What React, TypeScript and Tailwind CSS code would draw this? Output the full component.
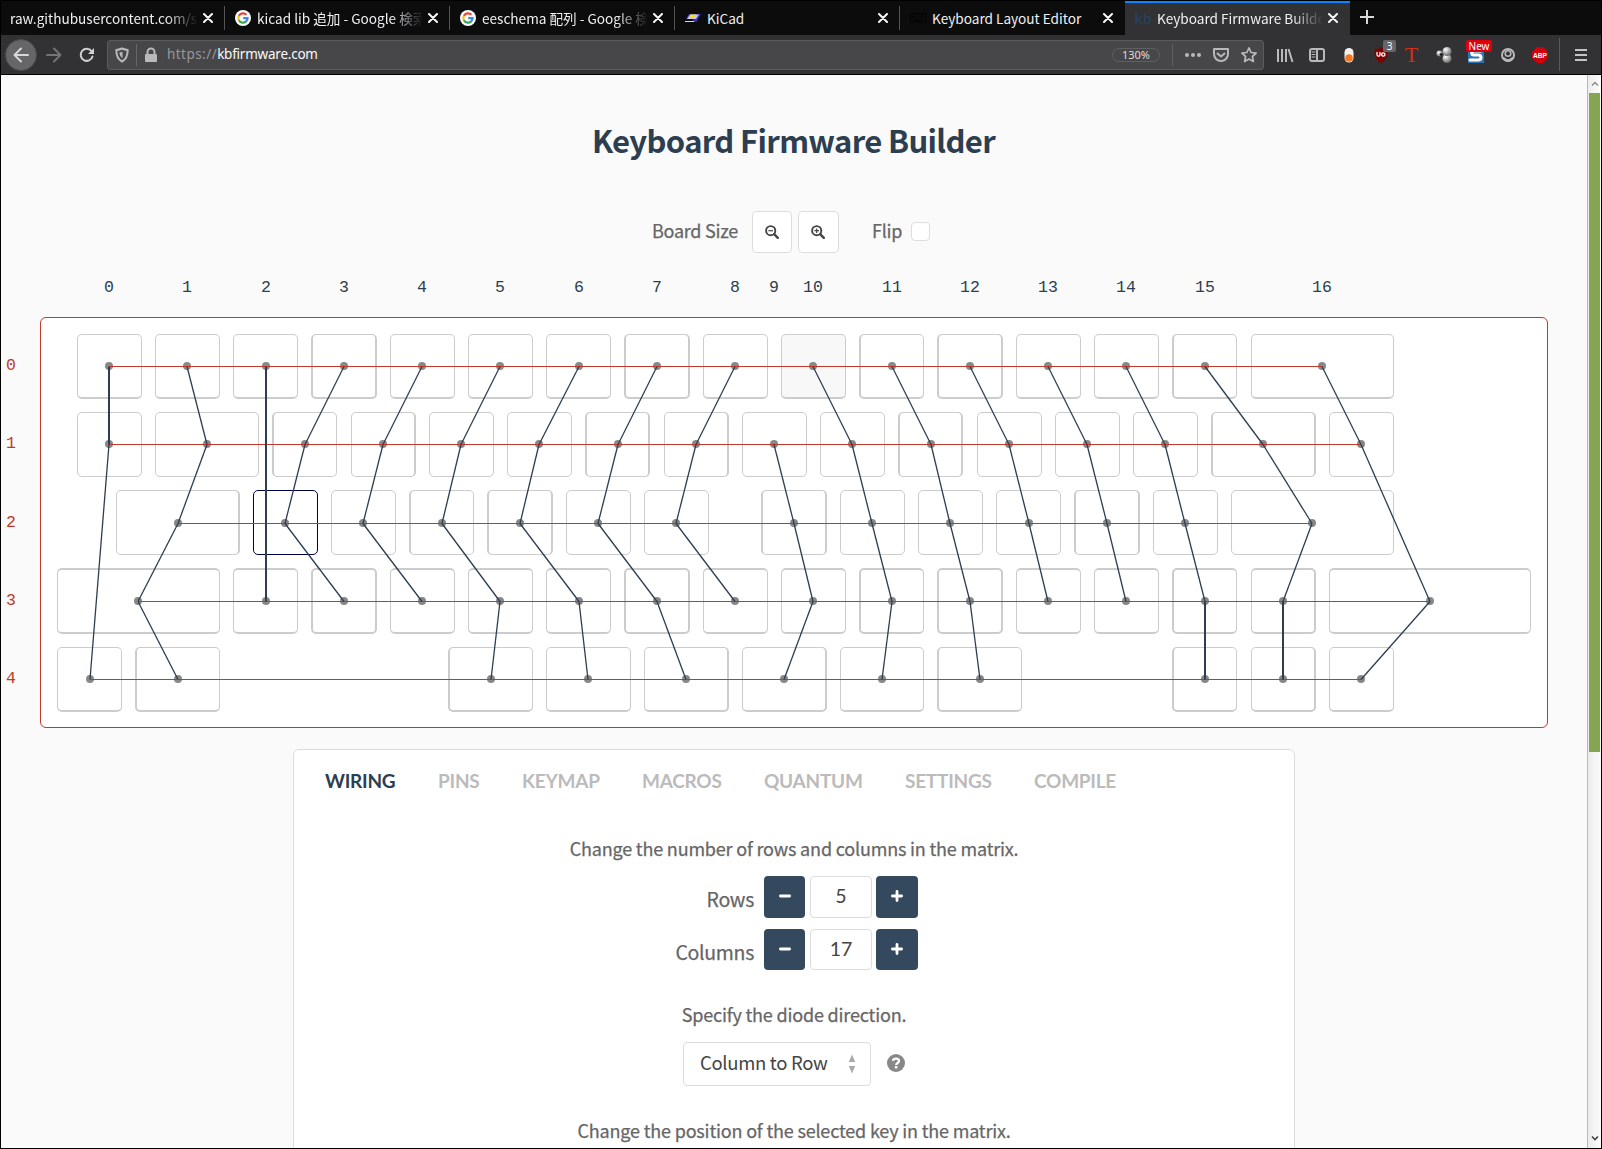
import React from "react";

const UNIT = 78.25;
const ORIGIN = 10.4;

/* Matrix wiring board: key rows given as [x, width] in key units */
const KEY_ROWS: [number, number][][] = [
  [[0.25, 1], [1.25, 1], [2.25, 1], [3.25, 1], [4.25, 1], [5.25, 1], [6.25, 1], [7.25, 1], [8.25, 1], [9.25, 1], [10.25, 1], [11.25, 1], [12.25, 1], [13.25, 1], [14.25, 1], [15.25, 2]],
  [[0.25, 1], [1.25, 1.5], [2.75, 1], [3.75, 1], [4.75, 1], [5.75, 1], [6.75, 1], [7.75, 1], [8.75, 1], [9.75, 1], [10.75, 1], [11.75, 1], [12.75, 1], [13.75, 1], [14.75, 1.5], [16.25, 1]],
  [[0.75, 1.75], [2.5, 1], [3.5, 1], [4.5, 1], [5.5, 1], [6.5, 1], [7.5, 1], [9, 1], [10, 1], [11, 1], [12, 1], [13, 1], [14, 1], [15, 2.25]],
  [[0, 2.25], [2.25, 1], [3.25, 1], [4.25, 1], [5.25, 1], [6.25, 1], [7.25, 1], [8.25, 1], [9.25, 1], [10.25, 1], [11.25, 1], [12.25, 1], [13.25, 1], [14.25, 1], [15.25, 1], [16.25, 2.75]],
  [[0, 1], [1, 1.25], [5, 1.25], [6.25, 1.25], [7.5, 1.25], [8.75, 1.25], [10, 1.25], [11.25, 1.25], [14.25, 1], [15.25, 1], [16.25, 1]],
];
const ROW_TOP = [17, 95, 173, 251, 330];
const ROW_BOTTOM = [82, 160, 238, 317, 395];
const WIRE_Y = [49, 127, 206, 284, 362];
const WIDE_LEFT = [3.25, 7.25, 10.25, 11.25, 14.25, 2.75, 6.75, 10.75, 14.75, 4.5, 5.5, 9, 13, 1, 5];
const WIDE_RIGHT = [4.25, 8.25, 12.25, 16.25, 4.75, 7.75, 8.75, 11.75, 2.5, 6.5, 10, 14];

/* Column wires: [row, centre x in units] */
const COLUMNS: [number, number][][] = [
  [[0, 0.75], [1, 0.75], [4, 0.5]],
  [[0, 1.75], [1, 2], [2, 1.625], [3, 1.125], [4, 1.625]],
  [[0, 2.75], [3, 2.75]],
  [[0, 3.75], [1, 3.25], [2, 3], [3, 3.75]],
  [[0, 4.75], [1, 4.25], [2, 4], [3, 4.75]],
  [[0, 5.75], [1, 5.25], [2, 5], [3, 5.75], [4, 5.625]],
  [[0, 6.75], [1, 6.25], [2, 6], [3, 6.75], [4, 6.875]],
  [[0, 7.75], [1, 7.25], [2, 7], [3, 7.75], [4, 8.125]],
  [[0, 8.75], [1, 8.25], [2, 8], [3, 8.75]],
  [[1, 9.25], [2, 9.5], [3, 9.75], [4, 9.375]],
  [[0, 9.75], [1, 10.25], [2, 10.5], [3, 10.75], [4, 10.625]],
  [[0, 10.75], [1, 11.25], [2, 11.5], [3, 11.75], [4, 11.875]],
  [[0, 11.75], [1, 12.25], [2, 12.5], [3, 12.75]],
  [[0, 12.75], [1, 13.25], [2, 13.5], [3, 13.75]],
  [[0, 13.75], [1, 14.25], [2, 14.5], [3, 14.75], [4, 14.75]],
  [[0, 14.75], [1, 15.5], [2, 16.125], [3, 15.75], [4, 15.75]],
  [[0, 16.25], [1, 16.75], [3, 17.625], [4, 16.75]],
];

const cx = (u: number) => Math.round(ORIGIN + u * UNIT);

function Key({ row, x, w }: { row: number; x: number; w: number }) {
  const wideL = WIDE_LEFT.includes(x);
  const wideR = WIDE_RIGHT.includes(x + w);
  const l = ORIGIN + x * UNIT + 6.85;
  const left = wideL ? Math.ceil(l - 0.05) - 1 : Math.round(l);
  const right = Math.ceil(ORIGIN + (x + w) * UNIT - 6.85);
  const selected = row === 2 && x === 2.5;
  const hovered = row === 0 && x === 9.25;
  return (
    <div
      className={`absolute rounded-[5px] border-solid ${selected ? "border-[#000044]" : "border-[#cccccc]"} ${hovered ? "bg-[#f8f8f8]" : "bg-white"}`}
      style={{
        left,
        top: ROW_TOP[row],
        width: right - left,
        height: ROW_BOTTOM[row] - ROW_TOP[row],
        borderLeftWidth: wideL ? 2 : 1,
        borderRightWidth: wideR && !selected ? 2 : 1,
        borderTopWidth: row === 3 ? 2 : 1,
        borderBottomWidth: row === 0 || row > 2 ? 2 : 1,
      }}
    />
  );
}

function Board() {
  const dots = COLUMNS.flat();
  return (
    <div className="relative ml-[39px] h-[411px] w-[1508px] font-['Liberation_Mono',monospace] text-[16.5px]">
      <div className="h-full w-full rounded-[6px] border border-[#c0392b] bg-white" />
      {KEY_ROWS.map((keys, r) => keys.map(([x, w]) => <Key key={`${r}-${x}`} row={r} x={x} w={w} />))}
      <svg className="absolute left-0 top-0" width="1508" height="411" viewBox="0 0 1508 411">
        {dots.map(([r, u], i) => (
          <circle key={i} cx={cx(u)} cy={WIRE_Y[r]} r="4" fill="#888888" />
        ))}
        {WIRE_Y.map((y, r) => {
          const xs = dots.filter((d) => d[0] === r).map((d) => cx(d[1]));
          const a = Math.min(...xs);
          return <rect key={r} x={a} y={y} width={Math.max(...xs) - a} height="1" fill="#c0392b" />;
        })}
        {COLUMNS.map((pts, c) =>
          pts.slice(1).map(([r, u], i) => {
            const [pr, pu] = pts[i];
            return (
              <line
                key={`${c}-${i}`}
                x1={cx(pu)}
                y1={WIRE_Y[pr] + 0.5}
                x2={cx(u)}
                y2={WIRE_Y[r] + 0.5}
                stroke="#2c3e50"
                strokeWidth={pu === u ? 2 : 1.3}
              />
            );
          }),
        )}
      </svg>
      {COLUMNS.map((pts, c) => (
        <span key={c} className="absolute -top-[39px] w-10 text-center leading-5 text-[#2c3e50]" style={{ left: cx(pts[0][1]) - 20 }}>
          {c}
        </span>
      ))}
      {WIRE_Y.map((y, r) => (
        <span key={r} className="absolute -left-[39px] w-5 text-center leading-5 text-[#c0392b]" style={{ top: y - 10 }}>
          {r}
        </span>
      ))}
    </div>
  );
}

const Cross = () => (
  <svg width="10" height="10" viewBox="0 0 10 10" className="shrink-0" stroke="#f9f9fa" strokeWidth="2" strokeLinecap="round">
    <path d="M1 1l8 8M9 1L1 9" />
  </svg>
);

const Google = () => (
  <svg width="16" height="16" viewBox="0 0 16 16" fill="none" strokeWidth="2.2">
    <circle cx="8" cy="8" r="8" fill="#fff" />
    <path d="M11.4 4.8A4.6 4.6 0 0 0 3.9 5.9" stroke="#ea4335" />
    <path d="M3.9 5.9a4.6 4.6 0 0 0 0 4.3" stroke="#fbbc05" />
    <path d="M3.9 10.2a4.6 4.6 0 0 0 7.2 1.2" stroke="#34a853" />
    <path d="M8.2 8.1h4.4a4.6 4.6 0 0 1-1.6 3.5" stroke="#4285f4" />
  </svg>
);

const KiCadIcon = () => (
  <svg width="16" height="16" viewBox="0 0 16 16">
    <path d="M4 4h12l-4.500 8H7l1.500-3H1z" fill="#3a2fa8" />
    <path d="M5 4.500h9L11 9H2z" fill="#c9c4ee" />
    <path d="M6 4.500h5L9 8H4z" fill="#f2e21a" />
    <path d="M0 11.500h9" stroke="#ddd" />
  </svg>
);

const KeyboardIcon = () => (
  <svg width="16" height="16" viewBox="0 0 16 16" fill="none" stroke="#000">
    <rect x="0.5" y="4" width="15" height="8" />
    <path d="M2 6.500h12M2 8.500h12" strokeDasharray="1 1" />
    <path d="M4 10.500h8" />
  </svg>
);

const TABS: { icon?: React.ReactNode; title: string }[] = [
  { title: "raw.githubusercontent.com/sw" },
  { icon: <Google />, title: "kicad lib 追加 - Google 検索" },
  { icon: <Google />, title: "eeschema 配列 - Google 検索" },
  { icon: <KiCadIcon />, title: "KiCad" },
  { icon: <KeyboardIcon />, title: "Keyboard Layout Editor" },
  { icon: <span className="text-[14px] font-bold leading-4 text-[#2a3f58]">kb</span>, title: "Keyboard Firmware Builder" },
];

function TabStrip() {
  return (
    <div className="flex h-[34px] bg-[#0c0c0d] font-['Noto_Sans_CJK_JP',sans-serif] text-[13.6px] text-[#f0f0f2]">
      {TABS.map((t, i) => {
        const active = i === 5;
        return (
          <div key={i} className={`relative flex items-center pr-[12px] ${i === 0 ? "w-[224px] pl-[9px]" : "w-[225px] pl-[10px]"} ${active ? "bg-[#323234]" : ""}`}>
            {active && <span className="absolute inset-x-0 top-0 h-[2px] bg-[#0a84ff]" />}
            {t.icon && <span className="mr-[6px] flex w-4 shrink-0 justify-center">{t.icon}</span>}
            <span
              className={`min-w-0 flex-1 overflow-hidden whitespace-nowrap leading-6 ${i < 3 || active ? "[mask-image:linear-gradient(to_left,transparent,black_32px)]" : ""}`}
            >
              {t.title}
            </span>
            <span className="ml-[5px]">
              <Cross />
            </span>
            {i < 4 && <span className="absolute right-0 top-[5px] h-[24px] w-px bg-[#545456]" />}
          </div>
        );
      })}
      <svg className="ml-[10px] mt-[9px]" width="14" height="14" viewBox="0 0 14 14" stroke="#d8d8da" strokeWidth="2">
        <path d="M7 0v14M0 7h14" />
      </svg>
    </div>
  );
}

const IconBox = ({ w = 16, children, className = "" }: { w?: number; children: React.ReactNode; className?: string }) => (
  <svg width={w} height="16" viewBox={`0 0 ${w} 16`} fill="none" stroke="#b9b9ba" strokeWidth="2" strokeLinecap="round" strokeLinejoin="round" className={`shrink-0 overflow-visible ${className}`}>
    {children}
  </svg>
);

function Toolbar() {
  return (
    <div className="flex h-[39px] items-center bg-[#323234] font-['Noto_Sans',sans-serif]">
      <span className="ml-[4px] flex h-8 w-8 items-center justify-center rounded-full border border-[#4b4b4d] bg-[#666668]">
        <IconBox>
          <path d="M15 8H1.500M8 1.500L1.500 8L8 14.500" stroke="#d7d7db" />
        </IconBox>
      </span>
      <IconBox className="ml-[9px]">
        <path d="M1 8h13.500M8 1.500L14.500 8L8 14.500" stroke="#747476" />
      </IconBox>
      <IconBox className="ml-[17px]">
        <path d="M13.500 9.500A6 6 0 1 1 12.500 4.200" stroke="#d0d0d2" />
        <path d="M15 1v6H9z" fill="#d0d0d2" stroke="none" />
      </IconBox>
      <div className="ml-[12px] flex h-[30px] w-[1157px] items-center rounded-[3px] border border-[#5c5c5e] bg-[#474749] pl-[6px] pr-[6px]">
        <IconBox>
          <path d="M8 1.500C6 2.500 4 2.800 2.300 3c0 5 .7 9 5.700 11.500C13 12 13.700 8 13.700 3C12 2.800 10 2.500 8 1.500z" />
          <path d="M8.500 4.800v6.400C6 9.500 5.600 7.500 5.500 5.500z" fill="#b9b9ba" stroke="none" />
        </IconBox>
        <span className="ml-[6px] h-[22px] w-px bg-[#666668]" />
        <IconBox className="ml-[6px]">
          <rect x="2" y="7" width="12" height="8" rx="1" fill="#b9b9ba" stroke="none" />
          <path d="M4.500 7V5a3.500 3.500 0 0 1 7 0v2" />
        </IconBox>
        <span className="ml-[8px] flex-1 text-[13.5px] tracking-[-0.23px] text-[#f9f9fa]">
          <span className="tracking-[0.45px] text-[#97979a]">https://</span>kbfirmware.com
        </span>
        <span className="h-[14px] w-[48px] rounded-full border border-[#5f5f61] text-center text-[11px] leading-[12px] text-[#dcdcde]">130%</span>
        <span className="ml-[12px] h-[22px] w-px bg-[#5f5f61]" />
        <IconBox className="ml-[12px]">
          <g fill="#b9b9ba" stroke="none">
            <circle cx="2" cy="8" r="2" />
            <circle cx="8" cy="8" r="2" />
            <circle cx="14" cy="8" r="2" />
          </g>
        </IconBox>
        <IconBox className="ml-[12px]">
          <path d="M1 2h14v5a7 7 0 0 1-14 0z" />
          <path d="M4.500 6.500L8 9.500l3.500-3" />
        </IconBox>
        <IconBox className="ml-[12px]">
          <path strokeWidth="1.7" d="M8 .9l2.100 4.600 5 .6-3.700 3.400 1 5L8 12l-4.400 2.500 1-5L.9 6.100l5-.6z" />
        </IconBox>
      </div>
      <div className="flex items-center gap-[16px] pl-[13px]">
        <IconBox>
          <path strokeLinecap="butt" d="M1 2v13M5 2v13M9 2v13M11.500 2l4 13" />
        </IconBox>
        <IconBox>
          <rect x="1" y="2" width="14" height="12" rx="2" />
          <path d="M8 2v12" />
          <path strokeWidth="1" d="M3 5h3M3 7.500h3M3 10h3" />
        </IconBox>
        <IconBox>
          <rect x="3.500" y="1" width="9" height="14.500" rx="4.500" fill="#f4f1ee" stroke="none" />
          <circle cx="8" cy="11" r="3.800" fill="#f5781e" stroke="none" />
        </IconBox>
        <span className="relative">
          <IconBox>
            <path d="M8 1c2 1.300 4 1.500 6 1.700C14 9 13 13 8 15.500C3 13 2 9 2 2.700C4 2.500 6 2.300 8 1z" fill="#800000" stroke="#800000" strokeWidth="1" />
            <path d="M4 5.500v2.200a1.500 1.500 0 0 0 3 0V5.500" stroke="#fff" strokeWidth="1.300" />
            <circle cx="10.300" cy="7.500" r="1.700" stroke="#fff" strokeWidth="1.300" />
          </IconBox>
          <span className="absolute -top-[7px] left-[10px] h-[12px] w-[13px] rounded-[2px] bg-[#666668] text-center text-[10px] leading-[12px] text-white">3</span>
        </span>
        <span className="-mr-px -ml-px w-4 pr-px text-center font-['Liberation_Serif',serif] text-[22px] leading-[14px] text-[#d1301c]">T</span>
        <IconBox className="ml-px">
          <defs>
            <radialGradient id="ball" cx="35%" cy="30%" r="70%">
              <stop offset="0" stopColor="#fff" />
              <stop offset="1" stopColor="#6b6b6b" />
            </radialGradient>
          </defs>
          <g stroke="none">
            <circle cx="11" cy="11.500" r="4.500" fill="url(#ball)" />
            <circle cx="11" cy="4.500" r="4.500" fill="url(#ball)" />
            <circle cx="3.500" cy="6.500" r="3" fill="url(#ball)" />
            <circle cx="5" cy="7.500" r="1.200" fill="#111" />
          </g>
        </IconBox>
        <span className="relative">
          <IconBox>
            <rect width="16" height="16" fill="#2f74b5" stroke="none" />
            <path d="M13 4H6c-3 0-3 4 0 4h4c4 0 4 5 0 5H2" stroke="#fff" strokeWidth="3" />
          </IconBox>
          <span className="absolute -left-[2px] -top-[7px] h-[12px] w-[26px] rounded-[2px] bg-[#e0000b] text-center text-[10px] leading-[12px] text-white">New</span>
        </span>
        <IconBox>
          <circle cx="8" cy="8" r="6" />
          <circle cx="8" cy="6.500" r="2.800" strokeWidth="1.600" />
          <path d="M4 11.500c2 2.500 6 2.500 8 0" strokeWidth="2.500" />
        </IconBox>
        <IconBox>
          <path d="M5 0h6l5 5v6l-5 5H5l-5-5V5z" fill="#d1000a" stroke="none" />
          <text x="8" y="10.800" textAnchor="middle" fontSize="7.500" fontWeight="bold" fontFamily="Liberation Sans, sans-serif" textLength="14" lengthAdjust="spacingAndGlyphs" fill="#fff" stroke="none">ABP</text>
        </IconBox>
      </div>
      <span className="ml-[11px] h-[33px] w-px bg-[#5a5a5c]" />
      <IconBox w={12} className="ml-[15px]">
        <path strokeLinecap="butt" stroke="#c4c4c6" d="M0 3h12M0 8h12M0 13h12" />
      </IconBox>
    </div>
  );
}

const Magnifier = ({ plus }: { plus?: boolean }) => (
  <svg width="14" height="14" viewBox="0 0 14 14" fill="none" stroke="#444444">
    <circle cx="5.700" cy="5.700" r="4.600" strokeWidth="1.900" />
    <path d="M9.200 9.200l3.600 3.600" strokeWidth="2.400" strokeLinecap="round" />
    <path d={plus ? "M3.400 5.700h4.600M5.700 3.400v4.600" : "M3.400 5.700h4.600"} strokeWidth="1.200" />
  </svg>
);

const Sign = ({ plus }: { plus?: boolean }) => (
  <svg width="12" height="12" viewBox="0 0 12 12" stroke="#fff" strokeWidth="2.800" strokeLinecap="round">
    <path d={plus ? "M1.400 6h9.200M6 1.400v9.200" : "M1.400 6h9.200"} />
  </svg>
);

function Stepper({ label, value, className }: { label: string; value: string; className: string }) {
  return (
    <div className={`flex ${className}`}>
      <span className="mr-[10px] w-[100px] pt-[8px] text-right text-[19.5px] leading-[30px] tracking-[-0.3px] text-[#666666] [-webkit-text-stroke:0.25px]">{label}</span>
      <span className="flex w-[41px] items-center justify-center rounded-[4px] bg-[#34495e] pb-[2px]">
        <Sign />
      </span>
      <span className="ml-[5px] w-[62px] rounded-[4px] border border-[#dddddd] bg-white text-center font-[Lato,sans-serif] text-[19.500px] leading-[37px] text-[#444444]">{value}</span>
      <span className="ml-[4px] flex w-[42px] items-center justify-center rounded-[4px] bg-[#34495e] pb-[2px]">
        <Sign plus />
      </span>
    </div>
  );
}

const MENU: [string, string][] = [
  ["WIRING", "w-[113px]"],
  ["PINS", "w-[84px]"],
  ["KEYMAP", "w-[120px]"],
  ["MACROS", "w-[122px]"],
  ["QUANTUM", "w-[141px]"],
  ["SETTINGS", "w-[129px]"],
  ["COMPILE", "w-[90px]"],
];

function Hint({ children, className }: { children: string; className: string }) {
  return <p className={`text-center leading-[28px] tracking-[-0.18px] [-webkit-text-stroke:0.25px] ${className}`}>{children}</p>;
}

function Panel() {
  return (
    <div className="ml-[292px] mt-[21px] h-[420px] w-[1002px] rounded-t-[6px] border border-[#dddddd] bg-white text-[18px] text-[#666666]">
      <div className="flex pl-[31px] pt-[19px] font-[Lato,sans-serif] text-[19px] font-bold leading-6 text-[#bbbbbb]">
        {MENU.map(([m, w], i) => (
          <span key={m} className={`${w} tracking-[-0.25px] ${i === 0 ? "text-[#2c3e50]" : ""}`}>
            {m}
          </span>
        ))}
      </div>
      <Hint className="mt-[41px]">Change the number of rows and columns in the matrix.</Hint>
      <Stepper label="Rows" value="5" className="ml-[360px] mt-[14px] h-[42px]" />
      <Stepper label="Columns" value="17" className="ml-[360px] mt-[11px] h-[41px]" />
      <Hint className="mt-[30px]">Specify the diode direction.</Hint>
      <div className="ml-[389px] mt-[14px] flex h-[44px] items-center">
        <span className="flex h-[44px] w-[188px] items-center rounded-[4px] border border-[#dddddd] pl-[16px] text-[18.5px] tracking-[-0.32px] text-[#444444]">
          <span className="w-[148px] pb-[2px]">Column to Row</span>
          <svg width="8" height="20" viewBox="0 0 8 20" fill="#aaaaaa">
            <path d="M4 .5l3.200 7.500H.8zM4 19.500l3.200-7.500H.8z" />
          </svg>
        </span>
        <svg className="mb-[2px] ml-[16px]" width="18" height="18" viewBox="0 0 18 18" fill="none">
          <circle cx="9" cy="9" r="9" fill="#888888" />
          <path d="M6 6.800C6.300 3.800 12 3.800 12 7c0 2-2.800 2-2.800 4" stroke="#fff" strokeWidth="2.300" />
          <rect x="7.900" y="12" width="2.500" height="2.500" fill="#fff" />
        </svg>
      </div>
      <Hint className="mt-[30px]">Change the position of the selected key in the matrix.</Hint>
    </div>
  );
}

export default function App() {
  return (
    <div className="flex h-[1149px] w-[1602px] flex-col overflow-hidden border border-black bg-[#fafafa]">
      <TabStrip />
      <Toolbar />
      <div className="flex min-h-0 flex-1 border-t border-black">
        <main className="h-[1073px] w-[1586px] overflow-hidden font-['Noto_Sans_CJK_JP',sans-serif] text-[#666666]">
          <h1 className="pl-px pr-[2px] pt-[43px] text-center text-[31px] font-bold leading-[44px] tracking-[-0.65px] text-[#2c3e50]">Keyboard Firmware Builder</h1>
          <div className="ml-[651px] mt-[49px] flex h-[42px] items-center text-[18px]">
            <span className="w-[100px] pb-[4px] tracking-[-0.25px] [-webkit-text-stroke:0.25px]">Board Size</span>
            <span className="flex h-[42px] w-[40px] items-center justify-center rounded-[4px] border border-[#dddddd] bg-white">
              <Magnifier />
            </span>
            <span className="ml-[6px] flex h-[42px] w-[41px] items-center justify-center rounded-[4px] border border-[#dddddd] bg-white pr-px">
              <Magnifier plus />
            </span>
            <span className="ml-[33px] w-[39px] pb-[4px] tracking-[-0.25px] [-webkit-text-stroke:0.25px]">Flip</span>
            <span className="mb-[2px] h-[19px] w-[19px] rounded-[4px] border border-[#dddddd] bg-white" />
          </div>
          <div className="h-[64px]" />
          <Board />
          <Panel />
        </main>
        <aside className="flex w-[14px] flex-col items-center border-l border-[#bbb8b5] bg-gradient-to-r from-[#ececec] to-[#fcfcfc] pl-px">
          <svg className="my-[5px]" width="8" height="8" viewBox="0 0 8 8" fill="none" stroke="#888888" strokeWidth="1.300">
            <path d="M1 5.500l3-3 3 3" />
          </svg>
          <div className="h-[659px] w-[11px] self-start bg-[#86a550]" />
          <svg className="mb-[6px] mt-auto" width="8" height="8" viewBox="0 0 8 8" fill="none" stroke="#444444" strokeWidth="1.600">
            <path d="M1 2.500l3 3 3-3" />
          </svg>
        </aside>
      </div>
    </div>
  );
}
